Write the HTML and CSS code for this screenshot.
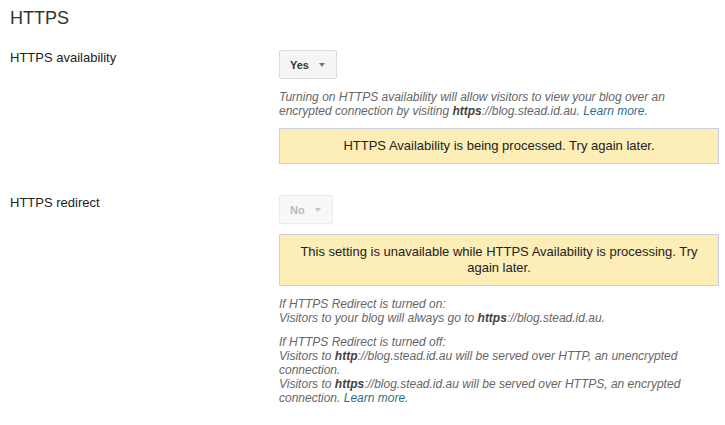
FILE: index.html
```html
<!DOCTYPE html>
<html>
<head>
<meta charset="utf-8">
<link rel="stylesheet" href="styles.css">
</head>
<body>
<div class="page">
  <h1 class="title">HTTPS</h1>
  <div class="row first">
    <div class="label">HTTPS availability</div>
    <div class="control">
      <div class="select"><span>Yes</span><span class="arrow"></span></div>
      <p class="help">Turning on HTTPS availability will allow visitors to view your blog over an encrypted connection by visiting <b>https</b>://blog.stead.id.au. <a class="link">Learn more.</a></p>
      <div class="notice">HTTPS Availability is being processed. Try again later.</div>
    </div>
  </div>
  <div class="row second">
    <div class="label">HTTPS redirect</div>
    <div class="control">
      <div class="select disabled"><span>No</span><span class="arrow"></span></div>
      <div class="notice notice-gap">This setting is unavailable while HTTPS Availability is processing. Try again later.</div>
      <p class="help">If HTTPS Redirect is turned on:<br>Visitors to your blog will always go to <b>https</b>://blog.stead.id.au.</p>
      <p class="help help-next">If HTTPS Redirect is turned off:<br>Visitors to <b>http</b>://blog.stead.id.au will be served over HTTP, an unencrypted connection.<br>Visitors to <b>https</b>://blog.stead.id.au will be served over HTTPS, an encrypted connection. <a class="link">Learn more.</a></p>
    </div>
  </div>
</div>
</body>
</html>
```

FILE: styles.css
```css
html, body {
  margin: 0;
  padding: 0;
  background: #fff;
}
body {
  font-family: Arial, "Liberation Sans", sans-serif;
  color: #222;
}
.page {
  padding: 5px 0 0 10px;
}
.title {
  margin: 0;
  font-size: 18px;
  font-weight: normal;
  line-height: 26px;
  color: #333;
}
.row {
  display: grid;
  grid-template-columns: 269px 440px;
}
.row.first {
  margin-top: 19px;
}
.row.second {
  margin-top: 31px;
}
.label {
  font-size: 13px;
  line-height: 16px;
  color: #222;
}
.select {
  display: inline-flex;
  align-items: center;
  box-sizing: border-box;
  height: 29px;
  padding: 0 11px 0 10px;
  background: #f5f5f5;
  border: 1px solid #dcdcdc;
  border-radius: 2px;
  font-size: 11px;
  font-weight: bold;
  color: #333;
  gap: 10px;
}
.select .arrow {
  width: 0;
  height: 0;
  border-left: 3.5px solid transparent;
  border-right: 3.5px solid transparent;
  border-top: 4px solid #777;
}
.select.disabled {
  background: #f8f8f8;
  border-color: #eaeaea;
  color: #b8b8b8;
}
.select.disabled .arrow {
  border-top-color: #c4c4c4;
}
.help {
  margin: 11px 0 0 0;
  font-size: 12px;
  line-height: 14px;
  font-style: italic;
  color: #666;
}
.help b {
  color: #444;
}
.help-next {
  margin-top: 10px;
}
.link {
  color: #2a6f8c;
}
.notice {
  margin-top: 10px;
  box-sizing: border-box;
  background: #fdedb7;
  border: 1px solid #c9cfe6;
  padding: 9px 14px;
  text-align: center;
  font-size: 13px;
  line-height: 16px;
  color: #222;
}
.notice-gap {
  margin-top: 10px;
}
```
